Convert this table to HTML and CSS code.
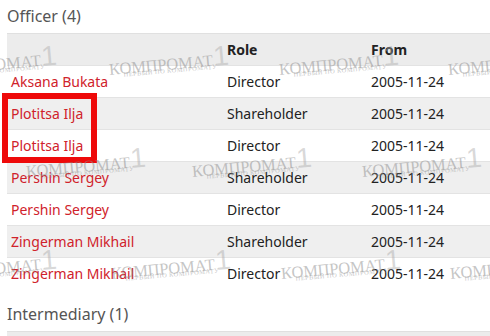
FILE: index.html
```html
<!DOCTYPE html>
<html lang="en">
<head>
<meta charset="utf-8">
<link rel="stylesheet" href="styles.css">
</head>
<body>
<div class="page">
  <h2 class="section-title">Officer (4)</h2>
  <table class="grid">
    <thead>
      <tr><th class="c-name"></th><th class="c-role">Role</th><th class="c-from">From</th></tr>
    </thead>
    <tbody>
      <tr><td><a>Aksana Bukata</a></td><td>Director</td><td>2005-11-24</td></tr>
      <tr><td><a>Plotitsa Ilja</a></td><td>Shareholder</td><td>2005-11-24</td></tr>
      <tr><td><a>Plotitsa Ilja</a></td><td>Director</td><td>2005-11-24</td></tr>
      <tr><td><a>Pershin Sergey</a></td><td>Shareholder</td><td>2005-11-24</td></tr>
      <tr><td><a>Pershin Sergey</a></td><td>Director</td><td>2005-11-24</td></tr>
      <tr><td><a>Zingerman Mikhail</a></td><td>Shareholder</td><td>2005-11-24</td></tr>
      <tr><td><a>Zingerman Mikhail</a></td><td>Director</td><td>2005-11-24</td></tr>
    </tbody>
  </table>
  <h2 class="section-title second">Intermediary (1)</h2>
  <div class="next-head"></div>
</div>

<div class="highlight"></div>

<div class="watermarks">
  <div class="wm" style="left:-62px;top:52px"><span class="wm-main">КОМПРОМАТ<span class="wm-one">1</span></span><span class="wm-sub">ПЕРВЫЙ ПО КОМПРОМАТУ</span></div>
  <div class="wm" style="left:110px;top:52px"><span class="wm-main">КОМПРОМАТ<span class="wm-one">1</span></span><span class="wm-sub">ПЕРВЫЙ ПО КОМПРОМАТУ</span></div>
  <div class="wm" style="left:280px;top:52px"><span class="wm-main">КОМПРОМАТ<span class="wm-one">1</span></span><span class="wm-sub">ПЕРВЫЙ ПО КОМПРОМАТУ</span></div>
  <div class="wm" style="left:449px;top:52px"><span class="wm-main">КОМПРОМАТ<span class="wm-one">1</span></span><span class="wm-sub">ПЕРВЫЙ ПО КОМПРОМАТУ</span></div>
  <div class="wm" style="left:27px;top:154px"><span class="wm-main">КОМПРОМАТ<span class="wm-one">1</span></span><span class="wm-sub">ПЕРВЫЙ ПО КОМПРОМАТУ</span></div>
  <div class="wm" style="left:193px;top:154px"><span class="wm-main">КОМПРОМАТ<span class="wm-one">1</span></span><span class="wm-sub">ПЕРВЫЙ ПО КОМПРОМАТУ</span></div>
  <div class="wm" style="left:363px;top:154px"><span class="wm-main">КОМПРОМАТ<span class="wm-one">1</span></span><span class="wm-sub">ПЕРВЫЙ ПО КОМПРОМАТУ</span></div>
  <div class="wm" style="left:-62px;top:256px"><span class="wm-main">КОМПРОМАТ<span class="wm-one">1</span></span><span class="wm-sub">ПЕРВЫЙ ПО КОМПРОМАТУ</span></div>
  <div class="wm" style="left:112px;top:256px"><span class="wm-main">КОМПРОМАТ<span class="wm-one">1</span></span><span class="wm-sub">ПЕРВЫЙ ПО КОМПРОМАТУ</span></div>
  <div class="wm" style="left:282px;top:256px"><span class="wm-main">КОМПРОМАТ<span class="wm-one">1</span></span><span class="wm-sub">ПЕРВЫЙ ПО КОМПРОМАТУ</span></div>
  <div class="wm" style="left:451px;top:256px"><span class="wm-main">КОМПРОМАТ<span class="wm-one">1</span></span><span class="wm-sub">ПЕРВЫЙ ПО КОМПРОМАТУ</span></div>
</div>
</body>
</html>
```
FILE: styles.css
```css
html, body {
  margin: 0;
  padding: 0;
  background: #ffffff;
  overflow: hidden;
}
body {
  font-family: "Noto Sans", "Open Sans", sans-serif;
  color: #222;
  width: 490px;
  height: 336px;
  position: relative;
}
.page {
  padding: 5px 0 0 7px;
}
.section-title {
  margin: 0 0 6px 0;
  font-size: 16px;
  font-weight: 400;
  line-height: 22px;
  color: #555;
}
.section-title.second {
  margin-top: 14px;
}
.grid {
  width: 483px;
  border-collapse: collapse;
  table-layout: fixed;
  font-size: 14px;
}
.grid th, .grid td {
  height: 31px;
  padding: 0 4px;
  text-align: left;
  vertical-align: middle;
  white-space: nowrap;
  border-top: 1px solid #e3e3e3;
}
.grid th {
  font-weight: 700;
  background: #ececec;
  height: 31px;
  border-top: 1px solid #e0e0e0;
}
.c-name { width: 208px; }
.c-role { width: 136px; }
.grid tbody tr:nth-child(even) td {
  background: #efefef;
}
.grid a {
  color: #d0222b;
  text-decoration: none;
}
.next-head {
  height: 10px;
  background: #ececec;
  border-top: 1px solid #e0e0e0;
}
.highlight {
  position: absolute;
  left: 2px;
  top: 93px;
  width: 83px;
  height: 58px;
  border: 6px solid #ee0a0a;
}
.watermarks {
  position: absolute;
  left: 0;
  top: 0;
  width: 490px;
  height: 336px;
  overflow: hidden;
  pointer-events: none;
}
.wm {
  position: absolute;
  width: 110px;
  transform: rotate(-5deg);
  transform-origin: left bottom;
  color: rgba(140, 140, 140, 0.5);
  font-family: "Liberation Serif", "DejaVu Serif", serif;
  line-height: 1;
}
.wm-main {
  display: block;
  font-size: 16.5px;
  letter-spacing: -0.2px;
  white-space: nowrap;
}
.wm-one {
  font-size: 28px;
  font-family: "Liberation Sans", sans-serif;
  color: rgba(170, 170, 170, 0.45);
  margin-left: 1px;
}
.wm-sub {
  display: block;
  font-size: 6.5px;
  letter-spacing: 0.4px;
  margin-left: 14px;
  margin-top: -7px;
  white-space: nowrap;
}
```
